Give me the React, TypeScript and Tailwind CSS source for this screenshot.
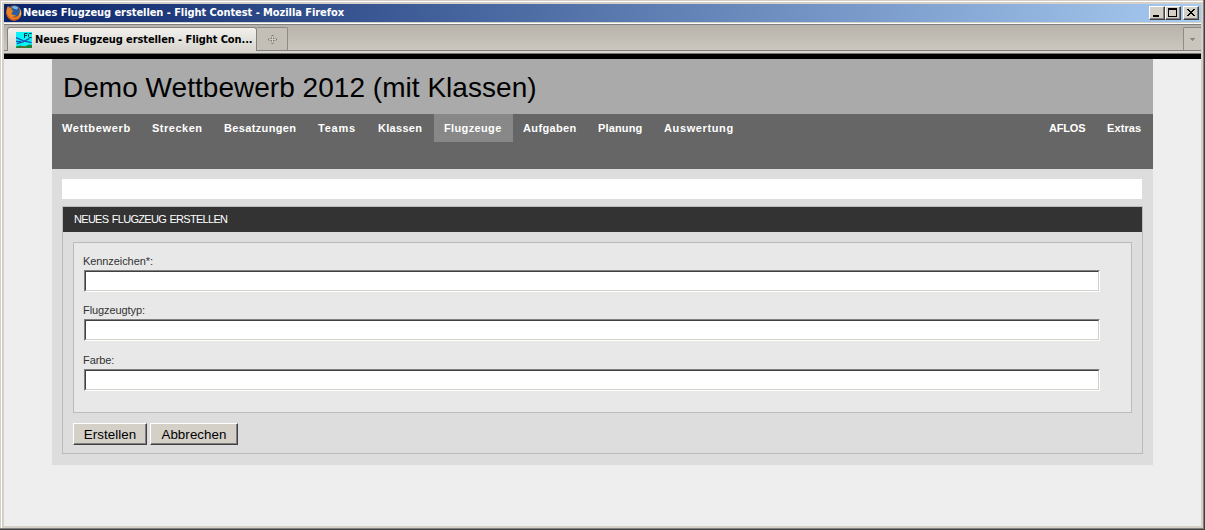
import type { ReactNode } from "react";

const navItems = [
  { label: "Wettbewerb", width: "w-[90px]", tracking: "tracking-[0.68px]" },
  { label: "Strecken", width: "w-[72px]", tracking: "tracking-[0.5px]" },
  { label: "Besatzungen", width: "w-[94px]", tracking: "tracking-[0.36px]" },
  { label: "Teams", width: "w-[60px]", tracking: "tracking-[0.75px]" },
  { label: "Klassen", width: "w-[66px]", tracking: "tracking-[0.3px]" },
  { label: "Flugzeuge", width: "w-[79px]", tracking: "tracking-[0.36px]", active: true },
  { label: "Aufgaben", width: "w-[75px]", tracking: "tracking-[0.36px]" },
  { label: "Planung", width: "w-[66px]", tracking: "tracking-[0.15px]" },
  { label: "Auswertung", width: "w-[92px]", tracking: "tracking-[0.62px]" },
];

const toolItems = [
  { label: "AFLOS", width: "w-[58px]", tracking: "tracking-[-0.2px]" },
  { label: "Extras", width: "w-[56px]", tracking: "tracking-[0.1px]" },
];

function NavItem({ label, width, tracking, active }: { label: string; width: string; tracking: string; active?: boolean }) {
  return (
    <a className={`block h-7 shrink-0 whitespace-nowrap pl-[10px] text-[11px] leading-[28px] font-bold text-white ${tracking} ${width} ${active ? "bg-[#888888]" : ""}`}>
      {label}
    </a>
  );
}

function FirefoxIcon() {
  return (
    <svg width="16" height="16" viewBox="0 0 16 16" className="shrink-0">
      <circle cx="8" cy="8" r="7.6" fill="#d9641a" />
      <circle cx="8.4" cy="6.2" r="5.6" fill="#2a5c9e" />
      <path d="M5.5 2.2Q9 -.2 12.4 2.6L11 4.6 8 3.8Z" fill="#79b4dd" />
      <path d="M1 3 2.1 .8 3.4 3 6.4 3.5 5.2 5 7.6 6 6 7.4 5.4 8.6Q7.6 11.2 10.6 9.6 8.5 12.6 5.4 11.6L8 13.4Q12.6 13 13.6 8.6L14 4.2Q17 10 12.5 14 7 17.5 2.3 13-.8 9 1 3Z" fill="#ee8322" />
      <path d="M.9 6Q1 12 6 14.2 11 15.5 14 11 11 17 5 15 .2 12 .9 6Z" fill="#c44a1a" />
      <path d="M13.6 3.4Q15.3 8 12.8 11.6L14.9 9.4Q15.6 6 13.6 3.4Z" fill="#fbd050" />
    </svg>
  );
}

function ContestIcon() {
  return (
    <svg width="16" height="16" viewBox="0 0 16 16" className="shrink-0">
      <path d="M0 0H16V16H0Z" fill="#0af4f8" />
      <path d="M0 14.5 4 13.5 9 14.5 13 12.6 16 13V16H0Z" fill="#208438" />
      <path d="M4 14.4H10V15.4H4Z" fill="#8a5a2c" />
      <path d="M0 5.6 7 8.6 15.5 10.6M1 11.6 7 10 13.5 6.4M0 9.4 5 9.6" stroke="#1b50b4" strokeWidth="1.3" fill="none" />
      <path d="M8.5 6V1.5H11.5M8.5 3.5H11M15.6 1.5H13.5L12.5 2.5V4.5L13.5 5.5H15.6" stroke="#07333c" strokeWidth="1" fill="none" />
    </svg>
  );
}

function WindowButton({ children }: { children: ReactNode }) {
  return (
    <span className="block h-[14px] w-4 border border-t-white border-l-white border-r-[#404040] border-b-[#404040] bg-[#d4d0c8] shadow-[inset_-1px_-1px_0_#808080]">
      <svg width="14" height="12" viewBox="0 0 14 12" shapeRendering="crispEdges" className="block">
        {children}
      </svg>
    </span>
  );
}

function Field({ label }: { label: string }) {
  return (
    <label className="block">
      <span className="block h-[18px] text-[11px] leading-[18px] tracking-[-0.08px] text-[#333333]">{label}</span>
      <span className="ml-px block h-[22px] w-[1016px] border border-t-[#808080] border-l-[#808080] border-r-white border-b-white">
        <input className="block h-5 w-full border border-t-[#404040] border-l-[#404040] border-r-[#d4d0c8] border-b-[#d4d0c8] bg-white outline-none" />
      </span>
    </label>
  );
}

function FormButton({ label, width }: { label: string; width: string }) {
  return (
    <button className={`block h-[22px] border border-t-white border-l-white border-r-[#404040] border-b-[#404040] bg-[#d4d0c8] text-[13.33px] leading-[21px] tracking-[0.08px] whitespace-nowrap text-black shadow-[inset_-1px_-1px_0_#808080] ${width}`}>
      {label}
    </button>
  );
}

export default function App() {
  return (
    <div className="flex h-[530px] w-[1205px] flex-col overflow-hidden border-r border-b border-[#404040] bg-[#d4d0c8] font-['Liberation_Sans',Arial,sans-serif]">
      <div className="flex h-[529px] flex-col border-r border-b border-[#808080] pt-px pl-px">
        <div className="flex min-h-0 flex-1 flex-col border-t border-l border-white pt-[2px] pr-[2px] pb-[2px] pl-[2px]">
          <header className="flex h-[18px] shrink-0 items-center bg-linear-to-r/srgb from-[#0a246a] to-[#a6caf0] pl-[2px]">
            <FirefoxIcon />
            <span className="ml-px flex-1 whitespace-nowrap font-['DejaVu_Sans_Condensed','DejaVu_Sans',sans-serif] text-[11px] leading-[18px] font-bold tracking-[-0.065px] text-white">
              Neues Flugzeug erstellen - Flight Contest - Mozilla Firefox
            </span>
            <div className="mr-[2px] flex">
              <WindowButton><path d="M3 8H9V10H3Z" /></WindowButton>
              <WindowButton><path fillRule="evenodd" d="M2 1H11V10H2ZM3 3V9H10V3Z" /></WindowButton>
              <span className="w-[2px]" />
              <WindowButton><path d="M3 2H5V3H6V4H8V3H9V2H11V3H10V4H9V5H8V6H9V7H10V8H11V9H9V8H8V7H6V8H5V9H3V8H4V7H5V6H6V5H5V4H4V3H3Z" /></WindowButton>
            </div>
          </header>
          <div className="mt-px h-px shrink-0 bg-white" />
          <div className="flex h-[27px] shrink-0 items-end border-t border-b border-t-[#808080] border-b-[#808080] bg-linear-to-b from-[#b7b3aa] to-[#cbc7bf] pl-[3px]">
            <div className="relative mb-[-1px] flex h-[24px] w-[250px] items-center rounded-t-[3px] border border-b-0 border-[#85827c] bg-linear-to-b from-[#f2f1ee] to-[#d7d4cd] pl-2">
              <ContestIcon />
              <span className="ml-[3px] whitespace-nowrap pt-px font-['DejaVu_Sans_Condensed','DejaVu_Sans',sans-serif] text-[11px] leading-4 font-bold tracking-[-0.09px] text-black">
                Neues Flugzeug erstellen - Flight Con...
              </span>
            </div>
            <div className="flex h-[23px] w-[31px] items-center justify-center rounded-tr-[2px] border border-b-0 border-l-0 border-[#8e8b85] bg-[#c3bfb7]">
              <svg width="9" height="9" viewBox="0 0 9 9" shapeRendering="crispEdges"><path d="M3 0H6V3H9V6H6V9H3V6H0V3H3Z" fill="#aaa69f" /><path d="M4 0H5V1H4ZM8 4H9V5H8ZM4 8H5V9H4ZM0 4H1V5H0ZM3 3H4V4H3ZM5 3H6V4H5ZM3 5H4V6H3ZM5 5H6V6H5Z" fill="#77746f" /><path d="M4 1H5V4H8V5H5V8H4V5H1V4H4Z" fill="#d2cec7" /></svg>
            </div>
            <div className="ml-auto flex h-[23px] w-[18px] items-center justify-center rounded-tl-[2px] border border-r-0 border-b-0 border-[#8e8b85] bg-[#c9c5bd]">
              <svg width="5" height="3" viewBox="0 0 5 3" shapeRendering="crispEdges"><path d="M0 0H5V1H4V2H3V3H2V2H1V1H0Z" fill="#8a8781" /></svg>
            </div>
          </div>
          <div className="h-[2px] shrink-0 bg-[#d8d5ce]" />
          <div className="h-px shrink-0 bg-[#77746f]" />
          <div className="h-[5px] shrink-0 bg-black" />
          <main className="min-h-0 flex-1 bg-[#eeeeee] pl-12">
            <div className="h-[406px] w-[1101px] bg-[#dddddd]">
              <h1 className="h-[55px] bg-[#aaaaaa] pl-[11px] text-[28px] leading-[57px] font-normal tracking-[0.03px] whitespace-nowrap text-black">
                Demo Wettbewerb 2012 (mit Klassen)
              </h1>
              <nav className="flex h-[55px] bg-[#666666]">
                {navItems.map((item) => <NavItem key={item.label} {...item} />)}
                <div className="ml-auto flex">
                  {toolItems.map((item) => <NavItem key={item.label} {...item} />)}
                </div>
              </nav>
              <div className="mt-[10px] ml-[10px] h-5 w-[1080px] bg-white" />
              <section className="mt-[7px] ml-[10px] h-[248px] w-[1081px] border border-[#bbbbbb]">
                <h2 className="h-[25px] bg-[#333333] pl-[11px] text-[11px] leading-[25px] tracking-[-0.7px] [word-spacing:1px] whitespace-nowrap text-white">NEUES FLUGZEUG ERSTELLEN</h2>
                <form className="px-[10px] pt-[10px]">
                  <div className="flex h-[171px] flex-col gap-[9.4px] border border-[#bbbbbb] bg-[#e8e8e8] pt-[9px] pl-[9px]">
                    <Field label="Kennzeichen*:" />
                    <Field label="Flugzeugtyp:" />
                    <Field label="Farbe:" />
                  </div>
                  <div className="mt-[10px] flex gap-[3px]">
                    <FormButton label="Erstellen" width="w-[74px]" />
                    <FormButton label="Abbrechen" width="w-[88px]" />
                  </div>
                </form>
              </section>
            </div>
          </main>
        </div>
      </div>
    </div>
  );
}
